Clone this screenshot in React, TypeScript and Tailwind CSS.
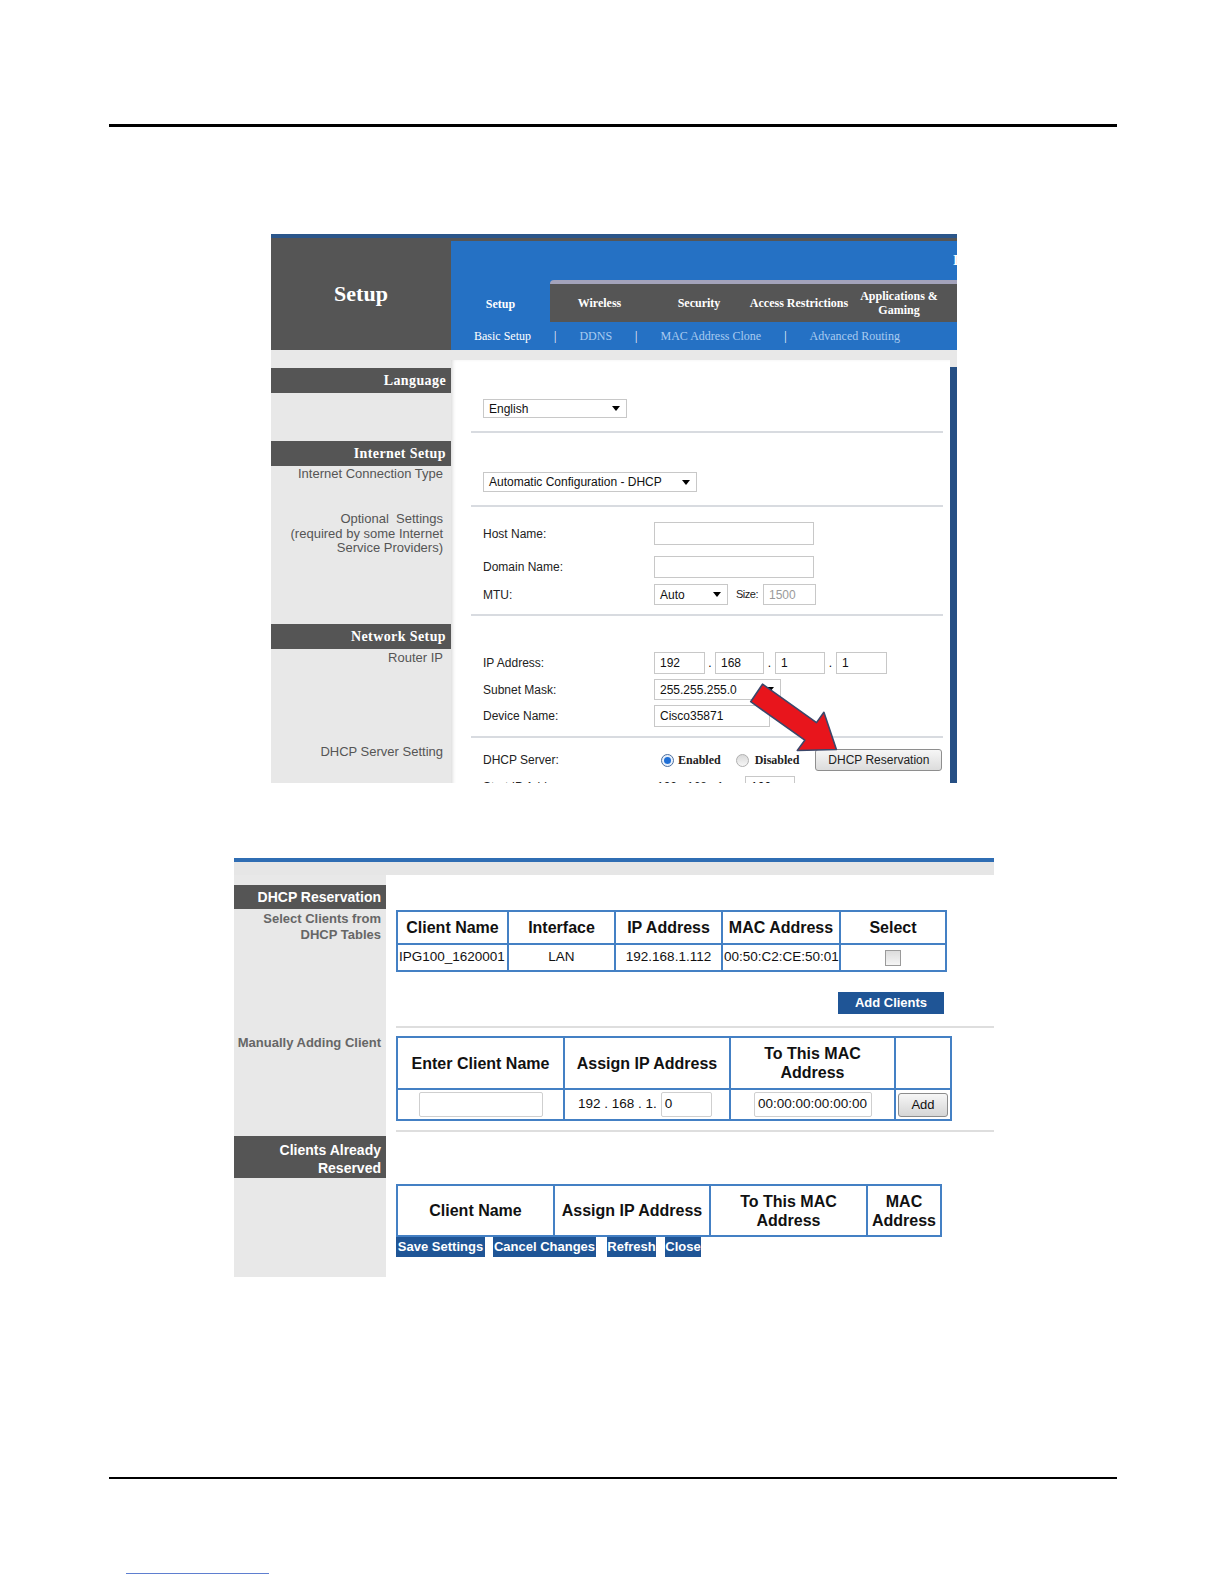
import React from "react";

const SERIF = "font-['Liberation_Serif','Times_New_Roman',serif]";
const SANS = "font-['Liberation_Sans',Arial,sans-serif]";

function Caret() {
  return <span className="inline-block w-0 h-0 border-x-[4px] border-x-transparent border-t-[5px] border-t-black" />;
}

function Select({ w, text }: { w: string; text: string }) {
  return (
    <div className={`${w} h-full flex items-center justify-between border border-[#c8c8c8] bg-white pl-[5px] pr-[6px] text-[12px] text-[#111]`}>
      <span className="whitespace-nowrap">{text}</span>
      <Caret />
    </div>
  );
}

function Input({ w, text, gray }: { w: string; text?: string; gray?: boolean }) {
  return (
    <div className={`${w} h-full flex items-center border border-[#c8c8c8] bg-white pl-[5px] text-[12px] ${gray ? "text-[#9a9a9a]" : "text-[#111]"}`}>
      <span className="whitespace-nowrap">{text}</span>
    </div>
  );
}

function DarkBar({ children, cls }: { children: React.ReactNode; cls: string }) {
  return (
    <div className={`${cls} h-[25px] bg-[#555555] flex items-center justify-end pr-[5px]`}>
      <span className={`${SERIF} font-bold text-[14px] text-white tracking-[0.4px]`}>{children}</span>
    </div>
  );
}

function Row({ cls, label, children }: { cls: string; label: string; children?: React.ReactNode }) {
  return (
    <div className={`${cls} flex items-center`}>
      <div className="w-[171px] shrink-0 text-[12px] text-[#222] whitespace-nowrap">{label}</div>
      <div className="flex items-center h-full">{children}</div>
    </div>
  );
}

function Hr({ cls }: { cls: string }) {
  return <div className={`${cls} ml-[-12px] w-[472px] h-[2px] bg-[#d8dbe0]`} />;
}

function TopShot() {
  return (
    <div className={`relative ml-[271px] mt-[107px] w-[686px] h-[549px] overflow-hidden bg-[#e8e8e8] ${SANS}`}>
      <div className="h-[4px] bg-[#2b568a]" />
      <div className="flex h-[112px]">
        <div className="w-[180px] bg-[#555555] flex items-center justify-center pb-[1px]">
          <span className={`${SERIF} font-bold text-[22px] text-white`}>Setup</span>
        </div>
        <div className="flex-1 flex flex-col bg-[#555555]">
          <div className="relative mt-[3px] h-[37px] bg-[#2571c4]">
            <span className={`absolute left-[502px] top-[9px] ${SERIF} font-bold text-[14px] text-white`}>I</span>
          </div>
          <div className="flex h-[44px]">
            <div className="w-[99px] bg-[#2571c4] pt-[7px] flex items-center justify-center">
              <span className={`${SERIF} font-bold text-[12px] text-white`}>Setup</span>
            </div>
            <div className="flex-1 flex flex-col bg-[#2571c4]">
              <div className="mt-[2px] h-[4px] bg-[#a3a3bb] rounded-tl-[4px]" />
              <div className={`flex-1 bg-[#555555] flex ${SERIF} font-bold text-[12px] text-white`}>
                <div className="w-[99px] flex items-center justify-center">Wireless</div>
                <div className="w-[100px] flex items-center justify-center">Security</div>
                <div className="w-[100px] flex items-center justify-center whitespace-nowrap">Access Restrictions</div>
                <div className="w-[100px] flex items-center justify-center text-center leading-[14px]">
                  Applications &amp;
                  <br />
                  Gaming
                </div>
              </div>
            </div>
          </div>
          <div className={`h-[28px] bg-[#2571c4] flex items-center pl-[23px] gap-[23px] ${SERIF} text-[12px] text-[#a9cbf0]`}>
            <span className="text-white">Basic Setup</span>
            <span className="text-white">|</span>
            <span>DDNS</span>
            <span className="text-white">|</span>
            <span>MAC Address Clone</span>
            <span className="text-white">|</span>
            <span>Advanced Routing</span>
          </div>
        </div>
      </div>

      <div className="flex">
        <div className="w-[180px] flex flex-col text-[13px] text-[#555] text-right">
          <DarkBar cls="mt-[18px]">Language</DarkBar>
          <DarkBar cls="mt-[48px]">Internet Setup</DarkBar>
          <div className="mt-[1px] pr-[8px] leading-[14px] whitespace-nowrap">Internet Connection Type</div>
          <div className="mt-[31px] pr-[8px] leading-[14.6px] whitespace-nowrap">
            Optional&nbsp; Settings
            <br />
            (required by some Internet
            <br />
            Service Providers)
          </div>
          <DarkBar cls="mt-[68px]">Network Setup</DarkBar>
          <div className="mt-[2px] pr-[8px] leading-[14px]">Router IP</div>
          <div className="mt-[80px] pr-[8px] leading-[14px]">DHCP Server Setting</div>
        </div>

        <div className="flex-1 flex pt-[10px]">
          <div className="w-[499px] h-[500px] bg-white pl-[32px] flex flex-col shadow-[inset_3px_0_4px_-2px_rgba(0,0,0,0.18)]">
            <div className="mt-[39px] h-[19px] flex">
              <Select w="w-[144px]" text="English" />
            </div>
            <Hr cls="mt-[13px]" />
            <div className="mt-[39px] h-[20px] flex">
              <Select w="w-[214px]" text="Automatic Configuration - DHCP" />
            </div>
            <Hr cls="mt-[13px]" />
            <Row cls="mt-[15px] h-[23px]" label="Host Name:">
              <Input w="w-[160px]" />
            </Row>
            <Row cls="mt-[11px] h-[22px]" label="Domain Name:">
              <Input w="w-[160px]" />
            </Row>
            <Row cls="mt-[6px] h-[21px]" label="MTU:">
              <Select w="w-[74px]" text="Auto" />
              <span className="ml-[8px] mr-[5px] text-[11px] tracking-[-0.5px] text-[#222]">Size:</span>
              <Input w="w-[53px]" text="1500" gray />
            </Row>
            <Hr cls="mt-[9px]" />
            <Row cls="mt-[36px] h-[22px]" label="IP Address:">
              <Input w="w-[51px]" text="192" />
              <span className="w-[10px] text-center text-[12px]">.</span>
              <Input w="w-[49px]" text="168" />
              <span className="w-[11px] text-center text-[12px]">.</span>
              <Input w="w-[50px]" text="1" />
              <span className="w-[11px] text-center text-[12px]">.</span>
              <Input w="w-[51px]" text="1" />
            </Row>
            <Row cls="mt-[5px] h-[21px]" label="Subnet Mask:">
              <Select w="w-[127px]" text="255.255.255.0" />
            </Row>
            <Row cls="mt-[5px] h-[22px]" label="Device Name:">
              <Input w="w-[116px]" text="Cisco35871" />
            </Row>
            <Hr cls="mt-[9px]" />
            <Row cls="mt-[11px] h-[22px]" label="DHCP Server:">
              <div className="ml-[7px] w-[13px] h-[13px] rounded-full border border-[#4d6f9e] bg-[#e8f0fb] flex items-center justify-center">
                <div className="w-[7px] h-[7px] rounded-full bg-[#1f6fd6]" />
              </div>
              <span className={`ml-[4px] ${SERIF} font-bold text-[12px] text-[#222]`}>Enabled</span>
              <div className="ml-[15px] w-[13px] h-[13px] rounded-full border border-[#b0b0b0] bg-gradient-to-b from-[#d9d9d9] to-[#f7f7f7]" />
              <span className={`ml-[6px] ${SERIF} font-bold text-[12px] text-[#222]`}>Disabled</span>
              <div className="ml-[16px] w-[127px] h-[22px] rounded-[3px] border border-[#8e8e8e] bg-gradient-to-b from-[#f6f6f6] to-[#dcdcdc] flex items-center justify-center text-[12px] text-[#222]">
                DHCP Reservation
              </div>
            </Row>
            <Row cls="mt-[5px] h-[22px]" label="Start IP Address:">
              <span className="ml-[3px] text-[12px] text-[#222]">192 . 168 . 1.</span>
              <div className="ml-[18px] h-full">
                <Input w="w-[50px]" text="100" />
              </div>
            </Row>
          </div>
          <div className="mt-[7px] w-[7px] h-[500px] bg-[#264f84]" />
        </div>
      </div>

      <svg className="absolute left-0 top-0 pointer-events-none" width="686" height="549" viewBox="271 234 686 549">
        <polygon
          points="762.5,684.2 816.5,722.6 823.9,712.3 836.4,749.5 797.3,750.5 804.8,740.2 750.7,701.7"
          fill="#e8151c"
          stroke="#3b476a"
          strokeWidth="1.6"
          strokeLinejoin="round"
        />
      </svg>
    </div>
  );
}

const TH = "border-2 border-[#4480c4] font-bold text-[16px] text-[#111] text-center leading-[19px]";
const TD = "border-2 border-[#4480c4] text-[13.5px] text-[#111] p-0";

function BlueBtn({ children, cls }: { children: React.ReactNode; cls: string }) {
  return (
    <div className={`${cls} bg-[#1f5596] text-white font-bold text-[13px] flex items-center justify-center whitespace-nowrap`}>
      {children}
    </div>
  );
}

function BottomShot() {
  return (
    <div className={`ml-[234px] mt-[75px] w-[760px] h-[419px] overflow-hidden ${SANS}`}>
      <div className="h-[4px] bg-[#2f6db3]" />
      <div className="h-[13px] bg-[#e6e6e6]" />
      <div className="flex h-[402px]">
        <div className="w-[152px] bg-[#e8e8e8] flex flex-col text-right">
          <div className="mt-[10px] h-[24px] bg-[#555555] flex items-center justify-end pr-[5px] text-white font-bold text-[14px] whitespace-nowrap">
            DHCP Reservation
          </div>
          <div className="mt-[2px] pr-[5px] text-[13px] font-bold text-[#666] leading-[15.5px] whitespace-nowrap">
            Select Clients from
            <br />
            DHCP Tables
          </div>
          <div className="mt-[93px] pr-[5px] text-[13px] font-bold text-[#666] leading-[15.5px] whitespace-nowrap">
            Manually Adding Client
          </div>
          <div className="mt-[85px] h-[42px] bg-[#555555] pr-[5px] pt-[5px] text-white font-bold text-[14px] leading-[18px]">
            Clients Already
            <br />
            Reserved
          </div>
        </div>

        <div className="flex-1 bg-white pl-[10px] flex flex-col">
          <table className="mt-[35px] w-[549px] table-fixed border-collapse">
            <thead>
              <tr className="h-[33px]">
                <th className={`${TH} w-[111px]`}>Client Name</th>
                <th className={`${TH} w-[107px]`}>Interface</th>
                <th className={`${TH} w-[107px]`}>IP Address</th>
                <th className={`${TH} w-[118px]`}>MAC Address</th>
                <th className={`${TH} w-[106px]`}>Select</th>
              </tr>
            </thead>
            <tbody>
              <tr className="h-[27px]">
                <td className={`${TD} pl-[1px] whitespace-nowrap`}>IPG100_1620001</td>
                <td className={`${TD} text-center`}>LAN</td>
                <td className={`${TD} text-center whitespace-nowrap`}>192.168.1.112</td>
                <td className={`${TD} pl-[1px] whitespace-nowrap overflow-hidden`}>00:50:C2:CE:50:01</td>
                <td className={`${TD}`}>
                  <div className="mx-auto w-[16px] h-[16px] border border-[#9a9a9a] bg-gradient-to-b from-[#dcdcdc] to-[#f5f5f5]" />
                </td>
              </tr>
            </tbody>
          </table>

          <BlueBtn cls="mt-[20px] self-end mr-[50px] w-[106px] h-[22px]">Add Clients</BlueBtn>

          <div className="mt-[12px] h-[2px] bg-[#dedede]" />

          <table className="mt-[8px] w-[554px] table-fixed border-collapse">
            <thead>
              <tr className="h-[52px]">
                <th className={`${TH} w-[167px]`}>Enter Client Name</th>
                <th className={`${TH} w-[166px]`}>Assign IP Address</th>
                <th className={`${TH} w-[165px]`}>
                  To This MAC
                  <br />
                  Address
                </th>
                <th className={`${TH} w-[56px]`}></th>
              </tr>
            </thead>
            <tbody>
              <tr className="h-[31px]">
                <td className={TD}>
                  <div className="mx-auto w-[124px] h-[25px] border border-[#cfcfcf] rounded-[2px] bg-white" />
                </td>
                <td className={TD}>
                  <div className="flex items-center pl-[13px]">
                    <span className="whitespace-nowrap">192 . 168 . 1.</span>
                    <div className="ml-[4px] w-[51px] h-[25px] border border-[#cfcfcf] rounded-[2px] bg-white flex items-center pl-[3px]">0</div>
                  </div>
                </td>
                <td className={TD}>
                  <div className="mx-auto w-[118px] h-[25px] border border-[#cfcfcf] rounded-[2px] bg-white flex items-center justify-center text-[13.5px] whitespace-nowrap">
                    00:00:00:00:00:00
                  </div>
                </td>
                <td className={TD}>
                  <div className="mx-auto w-[50px] h-[24px] rounded-[3px] border border-[#8c8c8c] bg-gradient-to-b from-[#f6f6f6] to-[#d6d6d6] flex items-center justify-center text-[13px]">
                    Add
                  </div>
                </td>
              </tr>
            </tbody>
          </table>

          <div className="mt-[9px] h-[2px] bg-[#dedede]" />

          <table className="mt-[52px] w-[544px] table-fixed border-collapse">
            <thead>
              <tr className="h-[51px]">
                <th className={`${TH} w-[157px]`}>Client Name</th>
                <th className={`${TH} w-[156px]`}>Assign IP Address</th>
                <th className={`${TH} w-[157px]`}>
                  To This MAC
                  <br />
                  Address
                </th>
                <th className={`${TH} w-[74px]`}>
                  MAC
                  <br />
                  Address
                </th>
              </tr>
            </thead>
          </table>

          <div className="flex">
            <BlueBtn cls="w-[89px] h-[20px]">Save Settings</BlueBtn>
            <BlueBtn cls="ml-[8px] w-[103px] h-[20px]">Cancel Changes</BlueBtn>
            <BlueBtn cls="ml-[11px] w-[49px] h-[20px]">Refresh</BlueBtn>
            <BlueBtn cls="ml-[9px] w-[36px] h-[20px]">Close</BlueBtn>
          </div>
        </div>
      </div>
    </div>
  );
}

export default function App() {
  return (
    <div className={`relative w-full h-[1584px] bg-white overflow-hidden ${SANS}`}>
      <div className="pt-[124px]">
        <div className="ml-[109px] w-[1008px] h-[3px] bg-black" />
      </div>
      <TopShot />
      <BottomShot />
      <div className="ml-[109px] mt-[200px] w-[1008px] h-[2px] bg-black" />
      <div className="ml-[126px] mt-[94px] w-[143px] h-px bg-[#5f7fd0]" />
    </div>
  );
}
